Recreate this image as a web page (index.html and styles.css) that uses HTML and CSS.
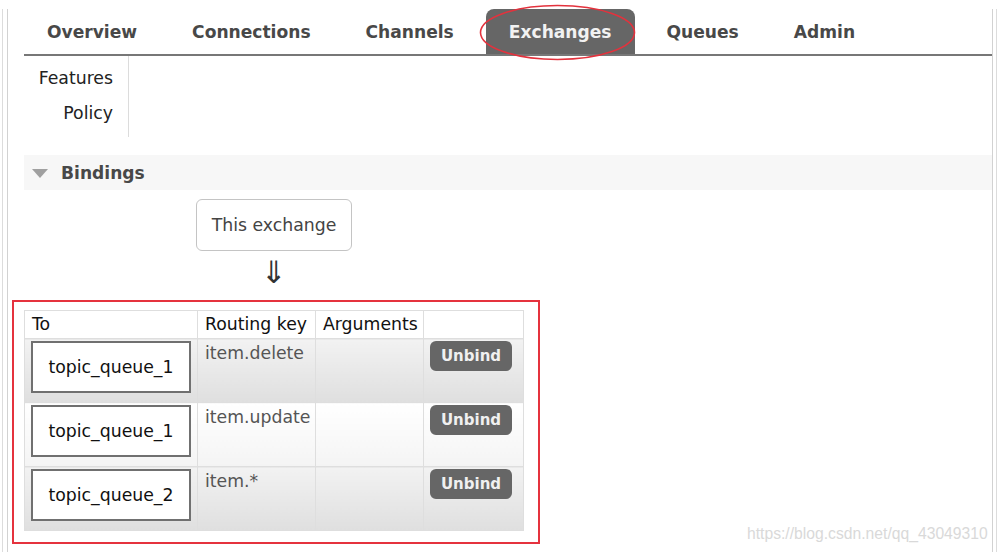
FILE: index.html
```html
<!DOCTYPE html>
<html>
<head>
<meta charset="utf-8">
<title>Exchange bindings</title>
<link rel="stylesheet" href="styles.css">
</head>
<body>
<div class="screen">
  <div class="outer">
    <div class="frame">
      <ul class="tabs">
        <li class="tab">Overview</li>
        <li class="tab">Connections</li>
        <li class="tab">Channels</li>
        <li class="tab active">Exchanges</li>
        <li class="tab">Queues</li>
        <li class="tab">Admin</li>
      </ul>
      <ul class="subnav">
        <li>Features</li>
        <li>Policy</li>
      </ul>
      <div class="section-head">
        <span class="tri"></span>
        <span class="section-title">Bindings</span>
      </div>
      <div class="bindings">
        <div class="this-ex">This exchange</div>
        <div class="arrow">⇓</div>
        <table class="list">
          <colgroup>
            <col class="c-to">
            <col class="c-rk">
            <col class="c-args">
            <col class="c-act">
          </colgroup>
          <thead>
            <tr>
              <th>To</th>
              <th>Routing key</th>
              <th>Arguments</th>
              <th></th>
            </tr>
          </thead>
          <tbody>
            <tr class="alt1">
              <td><div class="queue">topic_queue_1</div></td>
              <td class="rk">item.delete</td>
              <td></td>
              <td><span class="btn">Unbind</span></td>
            </tr>
            <tr class="alt2">
              <td><div class="queue">topic_queue_1</div></td>
              <td class="rk">item.update</td>
              <td></td>
              <td><span class="btn">Unbind</span></td>
            </tr>
            <tr class="alt1">
              <td><div class="queue">topic_queue_2</div></td>
              <td class="rk">item.*</td>
              <td></td>
              <td><span class="btn">Unbind</span></td>
            </tr>
          </tbody>
        </table>
      </div>
    </div>
  </div>
  <svg class="ring" width="158" height="58" viewBox="0 0 158 58"><ellipse cx="78.5" cy="28.5" rx="77" ry="27" fill="none" stroke="#e3323d" stroke-width="1.6"/></svg>
  <div class="redbox"></div>
  <div class="watermark">https://blog.csdn.net/qq_43049310</div>
</div>
</body>
</html>
```
FILE: styles.css
```css
html, body {
  margin: 0;
  padding: 0;
  background: #fff;
}
body {
  font-family: "DejaVu Sans", Verdana, sans-serif;
  font-size: 17.3px;
  color: #222;
}
.screen {
  position: relative;
  width: 999px;
  height: 552px;
  overflow: hidden;
}
.outer {
  margin-left: 2px;
  width: 993px;
  height: 552px;
  border-left: 1px solid #dcdcdc;
  border-right: 1px solid #dcdcdc;
}
.frame {
  margin-left: 4px;
  width: 968px;
  height: 548px;
  border-left: 1px solid #d2d2d2;
  border-right: 1px solid #d2d2d2;
  border-bottom: 1px solid #d2d2d2;
  padding-left: 16px;
}
.tabs {
  list-style: none;
  margin: 9px 0 0 0;
  padding: 0;
  display: flex;
  border-bottom: 2px solid #777;
}
.tab {
  height: 45px;
  line-height: 47px;
  padding: 0 23px;
  margin-right: 9px;
  font-weight: bold;
  font-size: 17.1px;
  color: #484848;
}
.tab.active {
  background: #666;
  color: #f2f2f2;
  border-radius: 8px 8px 0 0;
}
.subnav {
  list-style: none;
  margin: 0;
  padding: 5px 15px 6px 0;
  width: 89px;
  border-right: 1px solid #dcdcdc;
  text-align: right;
}
.subnav li {
  line-height: 35px;
  color: #222;
}
.section-head {
  margin-top: 18px;
  height: 35px;
  background: #f7f7f7;
  display: flex;
  align-items: center;
  padding-left: 8px;
}
.tri {
  width: 0;
  height: 0;
  border-left: 8px solid transparent;
  border-right: 8px solid transparent;
  border-top: 9px solid #a0a0a0;
  margin-right: 13px;
  margin-top: 1px;
}
.section-title {
  font-weight: bold;
  font-size: 17.1px;
  color: #484848;
  margin-top: 1px;
}
.bindings {
  padding-top: 9px;
}
.this-ex {
  margin-left: 172px;
  width: 154px;
  height: 50px;
  line-height: 50px;
  border: 1px solid #c4c4c4;
  border-radius: 6px;
  text-align: center;
  color: #444;
}
.arrow {
  width: 156px;
  margin-left: 172px;
  text-align: center;
  font-size: 31px;
  line-height: 34px;
  height: 34px;
  margin-top: 4px;
  color: #333;
}
.list {
  margin-top: 21px;
  border-collapse: collapse;
  width: 499px;
  table-layout: fixed;
}
.c-to { width: 173px; }
.c-rk { width: 118px; }
.c-args { width: 108px; }
.c-act { width: 100px; }
.list th, .list td {
  border: 1px solid #dedede;
  vertical-align: top;
  text-align: left;
  padding: 0;
}
.list th {
  font-weight: normal;
  color: #111;
  height: 27px;
  line-height: 27px;
  padding-left: 7px;
  background: #fff;
}
.list td {
  height: 64px;
  padding: 2px 0 0 6px;
  box-sizing: border-box;
}
.list tr.alt1 td {
  background: linear-gradient(#f2f2f2, #dfdfdf);
}
.list tr.alt2 td {
  background: linear-gradient(#ffffff, #f4f4f4);
}
.queue {
  width: 156px;
  height: 48px;
  line-height: 48px;
  border: 2px solid #707070;
  background: #fff;
  text-align: center;
  color: #111;
}
.list td.rk {
  color: #555;
  padding-left: 7px;
  padding-top: 4px;
  line-height: 20px;
}
.btn {
  display: inline-block;
  width: 82px;
  height: 30px;
  line-height: 30px;
  background: #666;
  color: #f0f0f0;
  border-radius: 6px;
  text-align: center;
  font-weight: bold;
  font-size: 15px;
}
.ring {
  position: absolute;
  left: 479px;
  top: 4px;
}
.redbox {
  position: absolute;
  left: 12px;
  top: 300px;
  width: 528px;
  height: 244px;
  border: 2px solid #e5323e;
  box-sizing: border-box;
}
.watermark {
  position: absolute;
  left: 747px;
  top: 525px;
  font-family: "Liberation Sans", Arial, sans-serif;
  font-size: 15.7px;
  line-height: 18px;
  color: #d9d9d9;
  white-space: nowrap;
}
```
